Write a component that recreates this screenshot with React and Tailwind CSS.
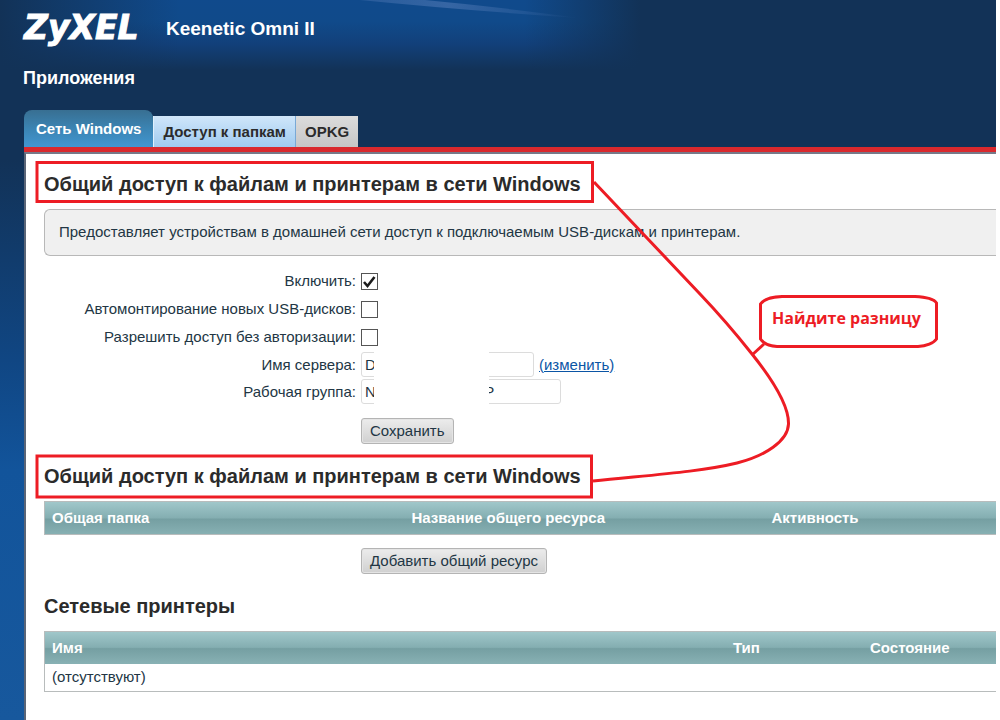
import React from "react";

const tabs = [
  { label: "Доступ к папкам", className: "px-[9px] bg-linear-to-b from-[#cfe6fa] to-[#a0cbef] border-x border-l-[#dff0fc] border-r-[#79a9d6]" },
  { label: "OPKG", className: "px-[9px] bg-linear-to-b from-[#dcdcdc] to-[#c6c6c6]" },
];

const headCell = "px-[7px] text-left font-bold text-white";
const headRow = "bg-[linear-gradient(to_bottom,#a0c7ca_0%,#84aeb1_48%,#759fa2_52%,#88b1b4_100%)]";
const button =
  "h-[26px] px-2 rounded-[3px] border border-[#b4b4b4] bg-linear-to-b from-[#ececec] to-[#d0d0d0] shadow-[inset_0_0_0_1px_#e4e4e4] leading-[22px] cursor-pointer";
const field = "h-[25px] pl-[3px] rounded-[3px] border border-[#dcdcdc] bg-white outline-none";
const label = "w-[312px] text-right";

const CheckRow = ({ id, text, checked }) => (
  <div className="flex items-center gap-[5px] h-7">
    <label htmlFor={id} className={label}>{text}</label>
    <span className="relative flex">
      <input
        id={id}
        type="checkbox"
        defaultChecked={checked}
        className="peer appearance-none w-[17px] h-[17px] border border-[#555] bg-white"
      />
      <svg className="absolute inset-0 hidden peer-checked:block pointer-events-none" width="17" height="17" viewBox="0 0 17 17">
        <path d="M3 9 L6.5 13 L13.5 4" fill="none" stroke="#1c1c1c" strokeWidth="2.6" />
      </svg>
    </span>
  </div>
);

const Header = () => (
  <header className="relative h-[110px] pt-1 text-white font-bold bg-[linear-gradient(to_right,#123257_0%,transparent_28%,transparent_82%,#123257_100%),linear-gradient(to_bottom,#104a8c_0,#104a8a_22px,#12407a_44px,#123257_70px)] bg-[length:640px_100%] bg-no-repeat">
    {/* light streak across the glow */}
    <svg className="absolute top-0 left-[340px]" width="240" height="24" viewBox="0 0 240 24">
      <defs>
        <linearGradient id="streak" x1="0" x2="1" y1="0" y2="0">
          <stop offset="0" stopColor="#6f8fc8" stopOpacity="0.25" />
          <stop offset="0.4" stopColor="#6f8fc8" stopOpacity="0.4" />
          <stop offset="1" stopColor="#6f8fc8" stopOpacity="0" />
        </linearGradient>
      </defs>
      <path d="M20 0 H85 Q150 6 240 18 Q120 10 20 0 Z" fill="url(#streak)" />
    </svg>
    <div className="flex items-center h-12">
      <span className="ml-6 w-[142px] font-['DejaVu_Sans'] italic text-[33px] leading-[48px] [-webkit-text-stroke:1px_white]">ZyXEL</span>
      <span className="text-[19px] leading-[50px] pt-0.5">Keenetic Omni II</span>
    </div>
    <h1 className="ml-[23px] mt-[14px] text-[18px] leading-6">Приложения</h1>
  </header>
);

const Annotations = () => (
  <div className="absolute top-0 left-0 w-[1000px] h-[500px] pointer-events-none">
    <svg width="1000" height="500" viewBox="0 0 1000 500" fill="none" stroke="#ed1c24" strokeWidth="3">
      <rect x="37" y="162.5" width="555.5" height="39" />
      <rect x="37" y="456" width="554.5" height="41" />
      <path d="M594 182 C625 215 655 246 700 294 C720 315 737 335 752 354 C772 379 789 406 788.5 424 C788 441 765 456 737 463 C700 472 650 475 593 481" />
      <path d="M782 296.5 H915 C926 297 934 299 936.5 303 V339 C934 343 926 346 918 346.5 H777 C769 346 763 343 760.5 339 V304 C763 300 770 297 782 296.5 Z" />
      <path d="M764 344 L752 355" />
    </svg>
    <span className="absolute left-[772px] top-[306px] font-['Open_Sans'] font-bold text-[16px] leading-6 text-[#ed1c24] whitespace-nowrap">
      Найдите разницу
    </span>
  </div>
);

export default function App() {
  return (
    <div className="relative min-h-screen overflow-hidden pr-1 bg-white font-['Liberation_Sans',sans-serif] text-[15px] leading-5 text-[#223644]">
      <div className="min-h-screen flex flex-col bg-[linear-gradient(to_bottom,#123257_0,#123257_160px,#104683_360px,#12549b_470px,#17589d_720px)]">
        <Header />

        <nav className="flex items-end ml-6 h-[37px] font-bold text-[#2b2b2b]">
          <button className="h-[37px] px-3 rounded-t-lg bg-linear-to-b from-[#386f92] via-[#3b84b3] to-[#4296d0] text-white cursor-pointer">
            Сеть Windows
          </button>
          {tabs.map((tab) => (
            <button key={tab.label} className={`h-[31px] cursor-pointer ${tab.className}`}>
              {tab.label}
            </button>
          ))}
        </nav>

        <main className="ml-6 grow flex flex-col border-t-[5px] border-[#d9292d] bg-white">
          <div className="grow pl-[18px] border-l-2 border-t-2 border-l-[#5a6577] border-t-[#777988]">
            <h2 className="mt-[18px] font-bold text-[20px] leading-6 text-[#2b2b2b]">
              Общий доступ к файлам и принтерам в сети Windows
            </h2>
            <p className="mt-[13px] h-[47px] pl-[14px] pb-px flex items-center border border-r-0 border-[#b8b8b8] rounded-l-md bg-[#f0f0f0]">
              Предоставляет устройствам в домашней сети доступ к подключаемым USB-дискам и принтерам.
            </p>

            <form className="mt-[11px]" onSubmit={(e) => e.preventDefault()}>
              <CheckRow id="enable" text="Включить:" checked />
              <CheckRow id="automount" text="Автомонтирование новых USB-дисков:" />
              <CheckRow id="anonymous" text="Разрешить доступ без авторизации:" />
              <div className="relative">
                <div className="flex items-center gap-[5px] h-[27px]">
                  <label htmlFor="server" className={label}>Имя сервера:</label>
                  <input id="server" defaultValue="D" className={`w-[173px] ${field}`} />
                  <a href="#rename" className="text-[#0b55a5] underline">(изменить)</a>
                </div>
                <div className="flex items-center gap-[5px] h-[27px]">
                  <label htmlFor="group" className={label}>Рабочая группа:</label>
                  <input id="group" defaultValue={"N" + "\u00a0".repeat(26) + "P"} className={`w-[200px] ${field}`} />
                </div>
                {/* blanked-out part of both names */}
                <div className="absolute inset-y-0 left-[330px] w-[115px] bg-white" />
              </div>
              <button className={`block ml-[317px] mt-[13px] ${button}`}>Сохранить</button>
            </form>

            <h2 className="mt-5 font-bold text-[20px] leading-6 text-[#2b2b2b]">
              Общий доступ к файлам и принтерам в сети Windows
            </h2>
            <table className="mt-[13px] w-full table-fixed border border-r-0 border-[#b8bcbc]">
              <thead>
                <tr className={`h-[33px] ${headRow}`}>
                  <th className={`w-[360px] ${headCell}`}>Общая папка</th>
                  <th className={`w-[360px] ${headCell}`}>Название общего ресурса</th>
                  <th className={headCell}>Активность</th>
                </tr>
              </thead>
            </table>
            <button className={`block ml-[317px] mt-[13px] ${button}`}>Добавить общий ресурс</button>

            <h2 className="mt-5 font-bold text-[20px] leading-6 text-[#2b2b2b]">Сетевые принтеры</h2>
            <table className="mt-[13px] w-full table-fixed border border-r-0 border-[#b8bcbc]">
              <thead>
                <tr className={`h-8 ${headRow}`}>
                  <th className={headCell}>Имя</th>
                  <th className={`w-[137px] ${headCell}`}>Тип</th>
                  <th className={`w-[133px] ${headCell}`}>Состояние</th>
                </tr>
              </thead>
              <tbody>
                <tr className="h-7">
                  <td colSpan={3} className="px-[7px]">(отсутствуют)</td>
                </tr>
              </tbody>
            </table>
          </div>
        </main>
      </div>
      <Annotations />
    </div>
  );
}
